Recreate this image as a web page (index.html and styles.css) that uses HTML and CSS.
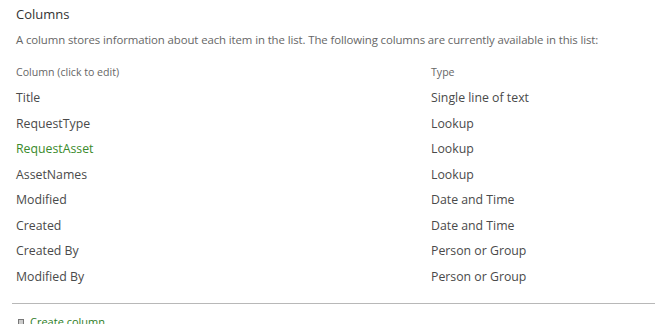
FILE: index.html
```html
<!DOCTYPE html>
<html>
<head>
<meta charset="utf-8">
<link rel="stylesheet" href="styles.css">
</head>
<body>
<div class="page">
  <h2 class="title">Columns</h2>
  <p class="desc">A column stores information about each item in the list. The following columns are currently available in this list:</p>
  <div class="cols">
    <div class="head">Column (click to edit)</div><div class="head">Type</div>
    <div class="cell">Title</div><div class="cell">Single line of text</div>
    <div class="cell">RequestType</div><div class="cell">Lookup</div>
    <div class="cell green">RequestAsset</div><div class="cell">Lookup</div>
    <div class="cell">AssetNames</div><div class="cell">Lookup</div>
    <div class="cell">Modified</div><div class="cell">Date and Time</div>
    <div class="cell">Created</div><div class="cell">Date and Time</div>
    <div class="cell">Created By</div><div class="cell">Person or Group</div>
    <div class="cell">Modified By</div><div class="cell">Person or Group</div>
  </div>
  <div class="rule"></div>
  <div class="create"><span class="bullet"></span><a class="link">Create column</a></div>
</div>
</body>
</html>
```
FILE: styles.css
```css
html, body { margin: 0; padding: 0; background: #fff; }
body { font-family: "Open Sans", "Noto Sans", sans-serif; color: #444; }
.page { padding: 4px 0 0 16px; }
.title { margin: 0; font-size: 13px; font-weight: normal; color: #333; line-height: 20px; }
.desc { margin: 8px 0 0; font-size: 11.4px; color: #666; line-height: 16px; letter-spacing: -0.1px; }
.cols { display: grid; grid-template-columns: 415px 1fr; margin-top: 14px; }
.head { font-size: 10.6px; color: #666; line-height: 20px; height: 20px; }
.cell { font-size: 12.3px; color: #4a4a4a; line-height: 25.5px; height: 25.5px; }
.cols .cell:nth-child(3), .cols .cell:nth-child(4) { margin-top: 3px; }
.green { color: #3a8a2b; }
.rule { margin: 14px 0 0 -4px; border-top: 1px solid #b8b8b8; }
.create { display: flex; align-items: center; gap: 6px; margin-top: 10px; padding-left: 2px; }
.bullet { width: 4px; height: 5px; border: 1px solid #777; background: #ccc; }
.link { font-size: 11px; color: #2e7d1f; text-decoration: underline; line-height: 16px; }
```
